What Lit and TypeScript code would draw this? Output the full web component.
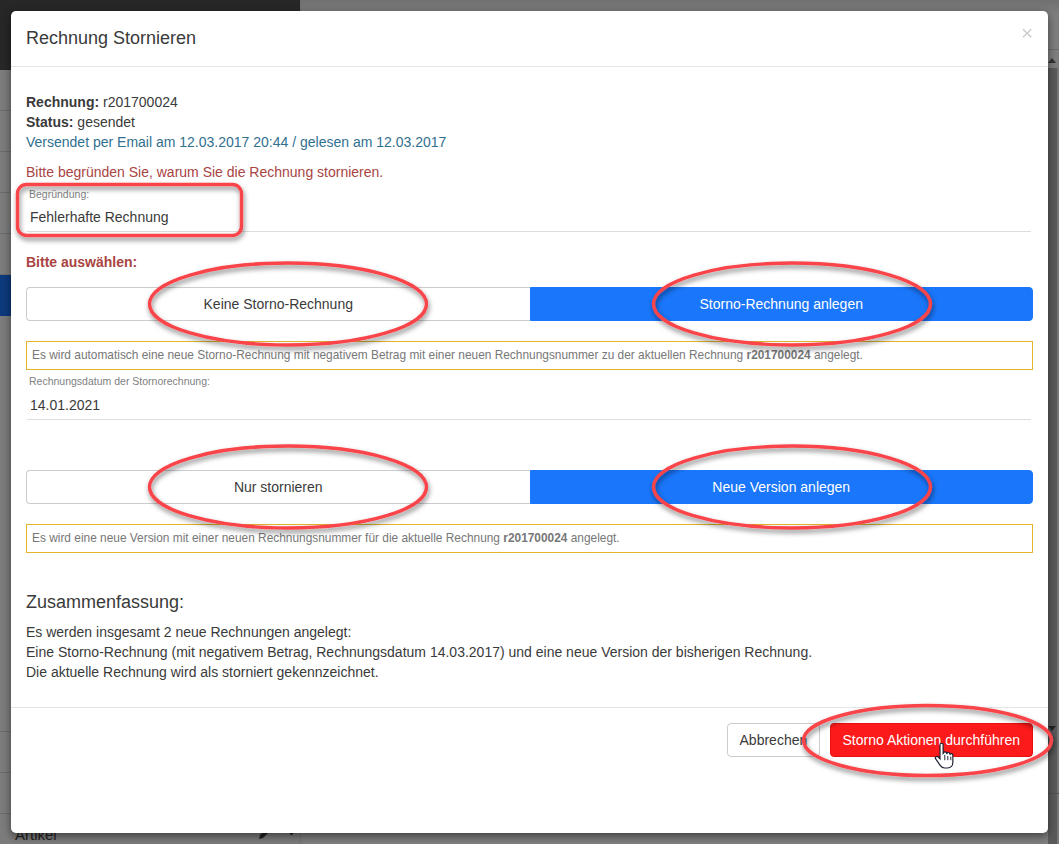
import { LitElement, html, css, svg } from "lit";
import { customElement } from "lit/decorators.js";

@customElement("app-root")
export class AppRoot extends LitElement {
  static styles = css`
    :host { display: block; width: 1059px; height: 844px; position: relative; overflow: hidden; background: #808080;
      font-family: "Liberation Sans", Arial, sans-serif; font-size: 14px; line-height: 20px; color: #3a3a3a; }
    * { box-sizing: border-box; }
    .backdrop { position: absolute; inset: 0; display: flex; }
    .side { width: 300px; display: flex; flex-direction: column; background: #7c7c7c; }
    .brand { height: 70px; background: #272727; flex: none; }
    .srow { height: 41px; flex: none; border-bottom: 1px solid #6c6c6c; }
    .srow.active { background: #0c3a7d; border: none; }
    .spacer { height: 375px; flex: none; }
    .artikel { flex: none; height: 24px; margin-top: 9px; padding-left: 15px; display: flex; align-items: center; color: #222; font-size: 15px; position: relative; }
    .artikel svg { position: absolute; }
    .main { flex: 1; display: flex; flex-direction: column; background: #7e7e7e; border-left: 1px solid #727272; }
    .topbar { height: 50px; flex: none; border-bottom: 1px solid #6c6c6c; background: linear-gradient(#707070, #7e7e7e 14px); }
    .right-strip { position: absolute; left: 1048px; top: 68px; width: 11px; height: 793px; background: #5a5a5a; }
    .right-strip::after { content: ""; position: absolute; left: 9px; top: 0; width: 2px; height: 793px; background: #777; }
    .strip-lo { position: absolute; left: 1048px; top: 793px; width: 11px; height: 1px; background: #505050; }
    .carup { position: absolute; left: 1048px; top: 58px; width: 0; height: 0; border: 4px solid transparent; border-top: 0; border-bottom: 5px solid #333; }
    .cardn { position: absolute; left: 1048px; top: 726px; width: 0; height: 0; border: 4px solid transparent; border-bottom: 0; border-top: 5px solid #222; }

    .modal { position: absolute; left: 11px; top: 11px; width: 1037px; height: 822px; background: #fff; border-radius: 5px;
      box-shadow: 0 3px 9px rgba(0,0,0,.5); display: flex; flex-direction: column; }
    .head { height: 56px; flex: none; padding: 0 15px; display: flex; align-items: center; justify-content: space-between; border-bottom: 1px solid #e5e5e5; }
    .title { font-size: 18px; line-height: 20px; margin-top: -1px; color: #3a3a3a; }
    .close { font-size: 21px; font-weight: 400; color: #000; opacity: .2; margin: -13px 0 0 0; line-height: 21px; width: 12px; display: flex; justify-content: center; }
    .body { flex: 1; padding: 25px 15px 0; display: flex; flex-direction: column; }
    .body .l { height: 20px; }
    .info { color: #31708f; }
    .body .danger { color: #a94442; }
    .reason { margin-top: 10px; }
    .field { padding: 0 0 0 1px; display: flex; flex-direction: column; }
    .flabel { font-size: 10.5px; line-height: 12px; color: #808080; padding-left: 2px; }
    .fval { padding: 5px 0 0 3px; line-height: 20px; border-bottom: 1px solid #ddd; margin-right: 2px; }
    .f1 .flabel { margin-top: 6px; }
    .f1 .fval { height: 32px; padding-top: 7px; }
    .pick { font-weight: 700; margin-top: 20px; }
    .seg { display: flex; height: 34px; width: 1007px; }
    .seg button { flex: 1 1 50%; font: 14px/20px "Liberation Sans", Arial, sans-serif; margin: 0; padding: 0; }
    .seg .a { background: #fff; border: 1px solid #ccc; border-right: 0; border-radius: 4px 0 0 4px; color: #3a3a3a; }
    .seg .b { background: #1a76fa; border: 1px solid #1a76fa; border-radius: 0 4px 4px 0; color: #fff; }
    .seg1 { margin-top: 15px; }
    .note { width: 1007px; height: 29px; border: 1px solid #e2b52a; font-size: 11.9px; line-height: 26px; color: #777; padding-left: 5px; white-space: nowrap; margin-top: 20px; }
    .f2 .flabel { margin-top: 5px; }
    .f2 .fval { height: 33px; padding-top: 8px; }
    .seg2 { margin-top: 50px; }
    .sum-t { font-size: 18px; line-height: 20px; margin-top: 39px; }
    .sum { margin-top: 10px; }
    .foot { height: 126px; flex: none; border-top: 1px solid #e5e5e5; padding: 15px 15px 0; display: flex; justify-content: flex-end; gap: 10px; align-items: flex-start; }
    .btn { height: 34px; font: 14px/20px "Liberation Sans", Arial, sans-serif; border-radius: 4px; margin: 0; padding: 0 12px; }
    .cancel { background: #fff; border: 1px solid #ccc; color: #3a3a3a; width: 93px; }
    .go { background: #fc1a1a; border: 1px solid #e81010; color: #fff; }
    .marks { position: absolute; left: 0; top: 0; pointer-events: none; }
  `;

  marks() {
    const ell = (cx: number, cy: number, rx: number, ry: number) =>
      svg`<ellipse cx=${cx} cy=${cy} rx=${rx} ry=${ry} />`;
    return html`<svg class="marks" width="1059" height="844" viewBox="0 0 1059 844">
      <defs><filter id="sh" x="-20%" y="-20%" width="140%" height="150%"><feDropShadow dx="1" dy="3" stdDeviation="2.5" flood-color="#000" flood-opacity=".5"/></filter></defs>
      <g fill="none" stroke="#f9444a" stroke-width="3.4" filter="url(#sh)">
        <rect x="17.5" y="184.5" width="224" height="51" rx="9" />
        ${ell(288, 304, 138.5, 41)}
        ${ell(792, 304, 138.5, 41)}
        ${ell(288, 487, 138.5, 41)}
        ${ell(792, 487, 138.5, 41)}
        ${ell(927.5, 740.5, 124, 35)}
      </g>
      <g transform="translate(940 744) scale(1.2) translate(-941 -747)">
        <path d="M941 747.5c0-1.500 2.600-1.500 2.600 0v7.500l.4-.4c0-1.400 2.500-1.400 2.500.2l.3.200c.2-1.300 2.400-1.300 2.400.300l.2.300c.4-1 2.300-.8 2.300.8v5.800c0 2.800-1.800 4.800-4.300 4.800h-2.500c-1.900 0-3-1-3.900-2.400l-3.600-5.200c-1-1.500.9-2.800 2.100-1.600l1.500 1.500z" fill="#fff" stroke="#1e2233" stroke-width="1"/>
        <path d="M945 756v4.500M947.500 757v3.500M950 757.500v3" stroke="#1e2233" stroke-width=".8" fill="none"/>
      </g>
    </svg>`;
  }

  render() {
    return html`
      <div class="backdrop">
        <div class="side">
          <div class="brand"></div>
          <div class="srow"></div>
          <div class="srow"></div>
          <div class="srow"></div>
          <div class="srow"></div>
          <div class="srow"></div>
          <div class="srow active"></div>
          <div class="spacer"></div>
          <div class="srow"></div>
          <div class="srow"></div>
          <div class="srow"></div>
          <div class="artikel">Artikel
            <svg style="left:258px;top:3px" width="14" height="14" viewBox="0 0 14 14"><path d="M1 13l1-4 7-7 3 3-7 7z" fill="#222"/></svg>
            <svg style="left:287px;top:7px" width="9" height="6" viewBox="0 0 9 6"><path d="M0 0h9L4.500 5.500z" fill="#222"/></svg>
          </div>
        </div>
        <div class="main"><div class="topbar"></div></div>
      </div>
      <div class="right-strip"></div>
      <div class="strip-lo"></div>
      <div class="carup"></div>
      <div class="cardn"></div>

      <div class="modal">
        <div class="head">
          <div class="title">Rechnung Stornieren</div>
          <div class="close">×</div>
        </div>
        <div class="body">
          <div class="l"><b>Rechnung:</b> r201700024</div>
          <div class="l"><b>Status:</b> gesendet</div>
          <div class="l info">Versendet per Email am 12.03.2017 20:44 / gelesen am 12.03.2017</div>
          <div class="l danger reason">Bitte begründen Sie, warum Sie die Rechnung stornieren.</div>
          <div class="field f1">
            <div class="flabel">Begründung:</div>
            <div class="fval">Fehlerhafte Rechnung</div>
          </div>
          <div class="l danger pick">Bitte auswählen:</div>
          <div class="seg seg1">
            <button class="a">Keine Storno-Rechnung</button>
            <button class="b">Storno-Rechnung anlegen</button>
          </div>
          <div class="note">Es wird automatisch eine neue Storno-Rechnung mit negativem Betrag mit einer neuen Rechnungsnummer zu der aktuellen Rechnung <b>r201700024</b> angelegt.</div>
          <div class="field f2">
            <div class="flabel">Rechnungsdatum der Stornorechnung:</div>
            <div class="fval">14.01.2021</div>
          </div>
          <div class="seg seg2">
            <button class="a">Nur stornieren</button>
            <button class="b">Neue Version anlegen</button>
          </div>
          <div class="note">Es wird eine neue Version mit einer neuen Rechnungsnummer für die aktuelle Rechnung <b>r201700024</b> angelegt.</div>
          <div class="sum-t">Zusammenfassung:</div>
          <div class="sum">
            <div class="l">Es werden insgesamt 2 neue Rechnungen angelegt:</div>
            <div class="l">Eine Storno-Rechnung (mit negativem Betrag, Rechnungsdatum 14.03.2017) und eine neue Version der bisherigen Rechnung.</div>
            <div class="l">Die aktuelle Rechnung wird als storniert gekennzeichnet.</div>
          </div>
        </div>
        <div class="foot">
          <button class="btn cancel">Abbrechen</button>
          <button class="btn go">Storno Aktionen durchführen</button>
        </div>
      </div>
      ${this.marks()}
    `;
  }
}
